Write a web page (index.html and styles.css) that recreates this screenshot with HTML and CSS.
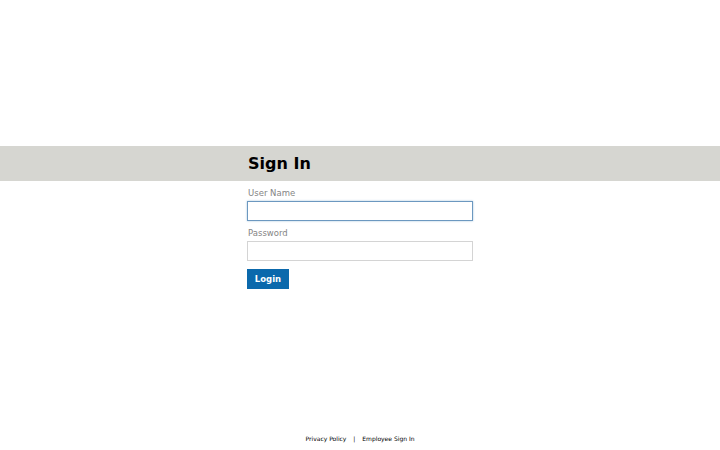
FILE: index.html
```html
<!DOCTYPE html>
<html lang="en">
  <head>
    <meta charset="UTF-8" />
    <title>Sign In</title>
    <link rel="stylesheet" href="styles.css">
  </head>
  <body>
    <div class="top-space"></div>

    <div class="title-band">
      <div class="inner">
        <h1>Sign In</h1>
      </div>
    </div>

    <form class="inner login-form" onsubmit="return false">
      <label for="username">User Name</label>
      <input type="text" id="username" autofocus autocomplete="off" />

      <label for="password">Password</label>
      <input type="password" id="password" />

      <button type="submit">Login</button>
    </form>

    <footer>
      <a href="#">Privacy Policy</a>
      <span class="sep">|</span>
      <a href="#">Employee Sign In</a>
    </footer>
  </body>
</html>
```

FILE: styles.css
```css
html, body {
  height: 100%;
}
body {
  margin: 0;
  font-family: "DejaVu Sans", sans-serif;
  background-color: #ffffff;
  color: #000;
  display: flex;
  flex-direction: column;
}
.top-space {
  height: 146px;
}
.inner {
  width: 226px;
  margin: 0 auto;
}
.title-band {
  background-color: #d6d6d1;
  height: 35px;
  display: flex;
  align-items: center;
}
.title-band h1 {
  margin: 0;
  font-size: 16px;
  font-weight: bold;
  padding-left: 1px;
}
.login-form {
  display: flex;
  flex-direction: column;
  align-items: flex-start;
  padding-top: 5px;
  flex: 1;
}
label {
  font-size: 8.5px;
  color: #858585;
  margin-left: 1px;
  line-height: 12px;
  padding-top: 1px;
  margin-bottom: 2px;
}
input {
  box-sizing: border-box;
  width: 226px;
  height: 20px;
  border: 1px solid #d4d4d4;
  padding: 0 3px;
  margin: 0 0 5px 0;
  font-family: "DejaVu Sans", sans-serif;
  font-size: 10px;
  outline: none;
}
input:focus {
  border-color: #6c98c0;
  box-shadow: 0 0 2px #a9c6de;
}
button {
  margin-top: 3px;
  width: 42px;
  height: 20px;
  background-color: #0b69ac;
  border: none;
  color: #fff;
  font-family: "DejaVu Sans", sans-serif;
  font-weight: bold;
  font-size: 8.5px;
  padding: 0;
  cursor: pointer;
}
footer {
  text-align: center;
  font-size: 6px;
  padding-bottom: 8px;
}
footer a {
  color: #000;
  text-decoration: none;
}
footer .sep {
  margin: 0 5px;
}
```
